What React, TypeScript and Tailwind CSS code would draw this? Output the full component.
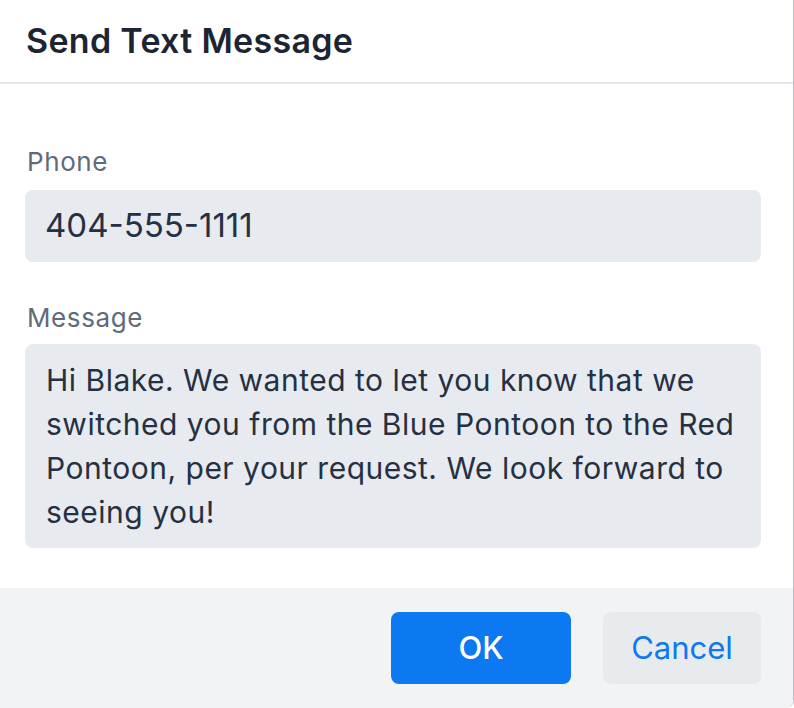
export default function App() {
  return (
    <div
      className="w-[794px] h-[708px] bg-white flex flex-col border-r border-[#b9bec6] rounded-br-[8px] overflow-hidden"
      style={{ fontFamily: "Inter, 'Noto Sans', sans-serif" }}
    >
      {/* Header */}
      <div className="h-[84px] shrink-0 flex items-center px-[26px] border-b-2 border-[#e3e6ea]">
        <h1 className="text-[34px] font-semibold text-[#1c2533] tracking-[0.3px] pb-[2px]">Send Text Message</h1>
      </div>

      {/* Body */}
      <div className="flex-1 flex flex-col pl-[25px] pr-[32px] pt-[62px]">
        <label className="text-[26px] leading-[32px] text-[#5f6b7b] pl-[2px] tracking-[0.6px]">Phone</label>
        <div className="mt-[12px] h-[72px] rounded-[8px] bg-[#e7eaef] flex items-center px-[20px] text-[33px] text-[#253142]">
          404-555-1111
        </div>

        <label className="mt-[40px] text-[26px] leading-[32px] text-[#5f6b7b] pl-[2px] tracking-[0.6px]">Message</label>
        <div className="mt-[10px] h-[204px] rounded-[8px] bg-[#e7eaef] pl-[21px] pr-[10px] pt-[14px] text-[30px] leading-[44px] tracking-[0.5px] text-[#253142]">
          Hi Blake. We wanted to let you know that we switched you from the Blue Pontoon to the Red Pontoon, per your request. We look forward to seeing you!
        </div>
      </div>

      {/* Footer */}
      <div className="h-[120px] shrink-0 bg-[#f2f3f5] flex items-center justify-end gap-[32px] pr-[32px]">
        <button className="w-[180px] h-[72px] rounded-[8px] bg-[#0c78f2] text-white text-[31px] font-medium">OK</button>
        <button className="w-[158px] h-[72px] rounded-[8px] bg-[#e8ebee] text-[#0c78f2] text-[31px]">Cancel</button>
      </div>
    </div>
  );
}
